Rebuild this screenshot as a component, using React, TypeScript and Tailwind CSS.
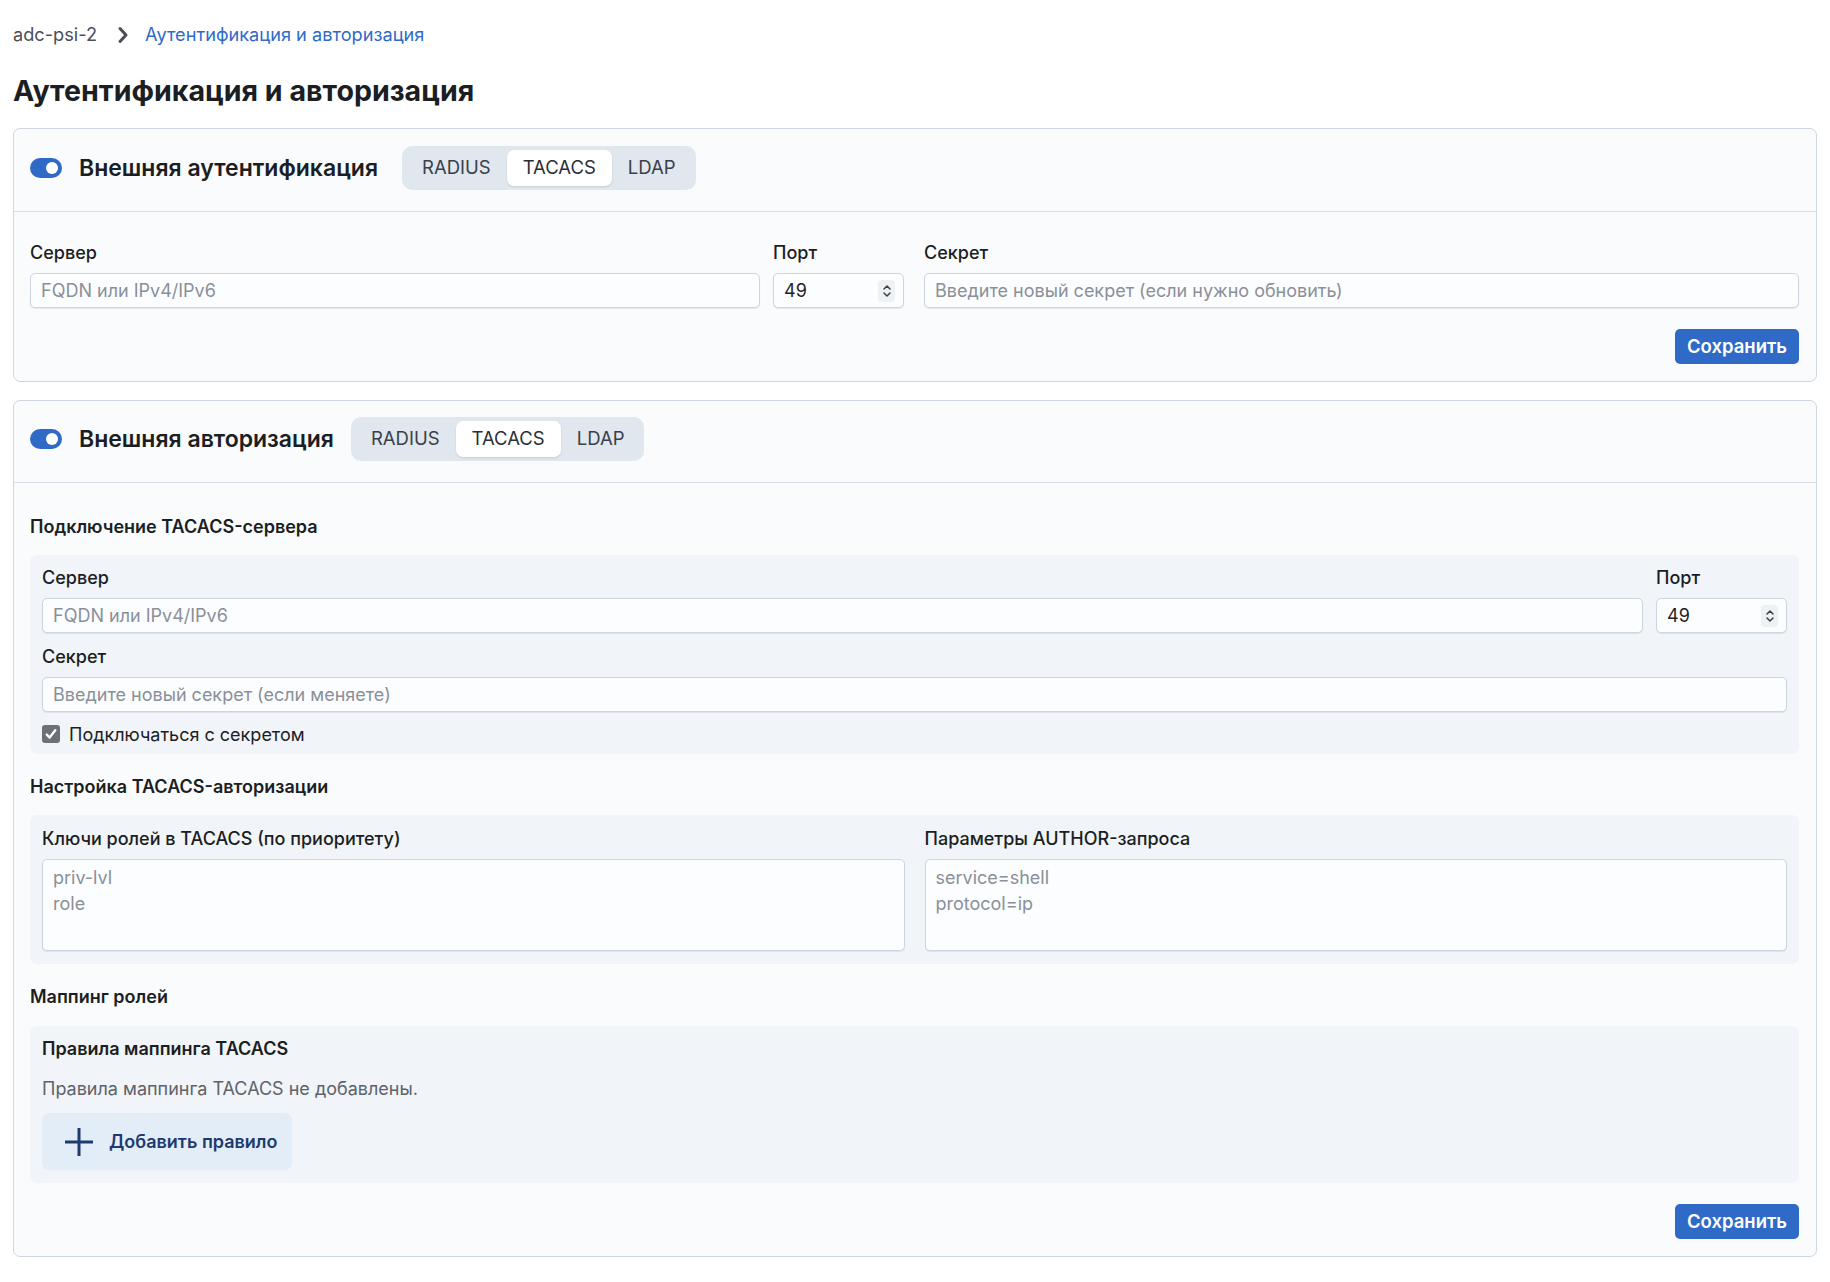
import React from "react";

function Toggle() {
  return (
    <div className="w-[32px] h-[20px] rounded-full bg-[#2f6ac7] flex items-center justify-end pr-[4px] shrink-0">
      <div className="w-[12px] h-[12px] rounded-full bg-white" />
    </div>
  );
}

function Segmented({ active }: { active: string }) {
  const tabs = ["RADIUS", "TACACS", "LDAP"];
  return (
    <div className="flex items-center h-[44px] p-[4px] rounded-[10px] bg-[#e1e7ee]">
      {tabs.map((t) => (
        <div
          key={t}
          className={
            t === active
              ? "h-[36px] px-[16px] flex items-center rounded-[7px] bg-white shadow-[0_1px_2px_rgba(0,0,0,0.12)] text-[18.5px] text-[#2a2f36]"
              : "h-[36px] px-[16px] flex items-center text-[18.5px] text-[#3a4049]"
          }
        >
          {t}
        </div>
      ))}
    </div>
  );
}

function Label({ children }: { children: React.ReactNode }) {
  return <div className="text-[18px] leading-[24px] font-medium text-[#1b1e22] mb-[8px]">{children}</div>;
}

function Input({ placeholder }: { placeholder: string }) {
  return (
    <div className="h-[35px] rounded-[5px] border border-[#cdd5df] bg-[#fcfdfe] shadow-[0_1px_1px_rgba(15,23,42,0.08)] px-[10px] flex items-center text-[18px] text-[#8a9099]">
      {placeholder}
    </div>
  );
}

function PortInput() {
  return (
    <div className="h-[35px] rounded-[5px] border border-[#cdd5df] bg-[#fcfdfe] shadow-[0_1px_1px_rgba(15,23,42,0.08)] pl-[10px] pr-[8px] flex items-center justify-between text-[18px] text-[#1f2328]">
      <span>49</span>
      <div className="w-[17px] h-[22px] rounded-[4px] bg-[#eef1f4] flex items-center justify-center">
        <svg width="10" height="16" viewBox="0 0 10 16" fill="none" stroke="#3b4048" strokeWidth="1.5" strokeLinecap="round" strokeLinejoin="round">
          <path d="M2 6 L5 3 L8 6" />
          <path d="M2 10 L5 13 L8 10" />
        </svg>
      </div>
    </div>
  );
}

function Area({ lines }: { lines: string[] }) {
  return (
    <div className="h-[92px] rounded-[5px] border border-[#cdd5df] bg-[#fcfdfe] shadow-[0_1px_1px_rgba(15,23,42,0.08)] px-[10px] pt-[5px] text-[18px] leading-[26px] text-[#8a9099]">
      {lines.map((l) => (
        <div key={l}>{l}</div>
      ))}
    </div>
  );
}

function SaveButton() {
  return (
    <div className="flex justify-end">
      <div className="h-[35px] w-[124px] rounded-[5px] bg-[#2f6ac7] text-white text-[18.5px] font-semibold flex items-center justify-center">
        Сохранить
      </div>
    </div>
  );
}

function Heading({ children }: { children: React.ReactNode }) {
  return <div className="text-[18px] leading-[24px] font-semibold text-[#1b1e22]">{children}</div>;
}

export default function App() {
  return (
    <div className="min-h-screen bg-white font-['Inter',sans-serif] text-[#1b1e22] px-[13px] pt-[22px] pb-[20px]">
      <div className="h-[26px] flex items-center text-[18.2px]">
        <span className="text-[#4a4f57]">adc-psi-2</span>
        <svg className="ml-[20px] mr-[16px]" width="12" height="18" viewBox="0 0 12 18" fill="none" stroke="#4a4f57" strokeWidth="3" strokeLinecap="round" strokeLinejoin="round">
          <path d="M3 2.5 L9 9 L3 15.5" />
        </svg>
        <span className="text-[#2f6ac7]">Аутентификация и авторизация</span>
      </div>
      <h1 className="mt-[25px] text-[28.6px] leading-[36px] font-bold text-[#1b1e22]">Аутентификация и авторизация</h1>

      {/* Card 1 */}
      <div className="mt-[19px] rounded-[7px] border border-[#cfd7e1] bg-[#f9fbfd]">
        <div className="pt-[17px] pb-[21px] px-[16px] flex items-center border-b border-[#d8dee6]">
          <Toggle />
          <div className="ml-[17px] text-[23px] font-semibold text-[#1b1e22]">Внешняя аутентификация</div>
          <div className="ml-[24px]">
            <Segmented active="TACACS" />
          </div>
        </div>
        <div className="pl-[16px] pr-[17px] pt-[29px] pb-[17px]">
          <div className="flex">
            <div className="w-[730px]">
              <Label>Сервер</Label>
              <Input placeholder="FQDN или IPv4/IPv6" />
            </div>
            <div className="w-[131px] ml-[13px]">
              <Label>Порт</Label>
              <PortInput />
            </div>
            <div className="flex-1 ml-[20px]">
              <Label>Секрет</Label>
              <Input placeholder="Введите новый секрет (если нужно обновить)" />
            </div>
          </div>
          <div className="mt-[21px]">
            <SaveButton />
          </div>
        </div>
      </div>

      {/* Card 2 */}
      <div className="mt-[18px] rounded-[7px] border border-[#cfd7e1] bg-[#f9fbfd]">
        <div className="pt-[16px] pb-[21px] px-[16px] flex items-center border-b border-[#d8dee6]">
          <Toggle />
          <div className="ml-[17px] text-[23px] font-semibold text-[#1b1e22]">Внешняя авторизация</div>
          <div className="ml-[17px]">
            <Segmented active="TACACS" />
          </div>
        </div>
        <div className="pl-[16px] pr-[17px] pt-[32px] pb-[17px]">
          <Heading>Подключение TACACS-сервера</Heading>
          <div className="mt-[16px] rounded-[7px] bg-[#f1f4f8] px-[12px] pt-[11px] pb-[8px]">
            <div className="flex">
              <div className="flex-1">
                <Label>Сервер</Label>
                <Input placeholder="FQDN или IPv4/IPv6" />
              </div>
              <div className="w-[131px] ml-[13px]">
                <Label>Порт</Label>
                <PortInput />
              </div>
            </div>
            <div className="mt-[12px]">
              <Label>Секрет</Label>
              <Input placeholder="Введите новый секрет (если меняете)" />
            </div>
            <div className="mt-[10px] h-[24px] flex items-center">
              <div className="w-[18px] h-[18px] rounded-[3px] bg-[#6b7079] flex items-center justify-center">
                <svg width="14" height="14" viewBox="0 0 13 13" fill="none" stroke="white" strokeWidth="2.2" strokeLinecap="round" strokeLinejoin="round">
                  <path d="M2.5 7 L5.2 9.8 L10.5 3" />
                </svg>
              </div>
              <span className="ml-[9px] text-[18px] text-[#1b1e22]">Подключаться с секретом</span>
            </div>
          </div>

          <div className="mt-[21px]">
            <Heading>Настройка TACACS-авторизации</Heading>
          </div>
          <div className="mt-[16px] rounded-[7px] bg-[#f1f4f8] px-[12px] pt-[12px] pb-[13px]">
            <div className="grid grid-cols-2 gap-[20px]">
              <div>
                <Label>Ключи ролей в TACACS (по приоритету)</Label>
                <Area lines={["priv-lvl", "role"]} />
              </div>
              <div>
                <Label>Параметры AUTHOR-запроса</Label>
                <Area lines={["service=shell", "protocol=ip"]} />
              </div>
            </div>
          </div>

          <div className="mt-[21px]">
            <Heading>Маппинг ролей</Heading>
          </div>
          <div className="mt-[17px] rounded-[7px] bg-[#f1f4f8] px-[12px] pt-[11px] pb-[13px]">
            <div className="text-[18px] leading-[24px] font-semibold text-[#1b1e22]">Правила маппинга TACACS</div>
            <div className="mt-[16px] text-[18px] leading-[24px] text-[#5d636b]">Правила маппинга TACACS не добавлены.</div>
            <div className="mt-[12px] h-[57px] w-[250px] rounded-[7px] bg-[#e3edf8] flex items-center pl-[22px]">
              <svg width="30" height="30" viewBox="0 0 30 30" fill="none" stroke="#1e3a6e" strokeWidth="3" strokeLinecap="butt">
                <path d="M15 1 V29" />
                <path d="M1 15 H29" />
              </svg>
              <span className="ml-[15px] text-[18px] font-semibold text-[#1e3a6e]">Добавить правило</span>
            </div>
          </div>

          <div className="mt-[21px]">
            <SaveButton />
          </div>
        </div>
      </div>
    </div>
  );
}
